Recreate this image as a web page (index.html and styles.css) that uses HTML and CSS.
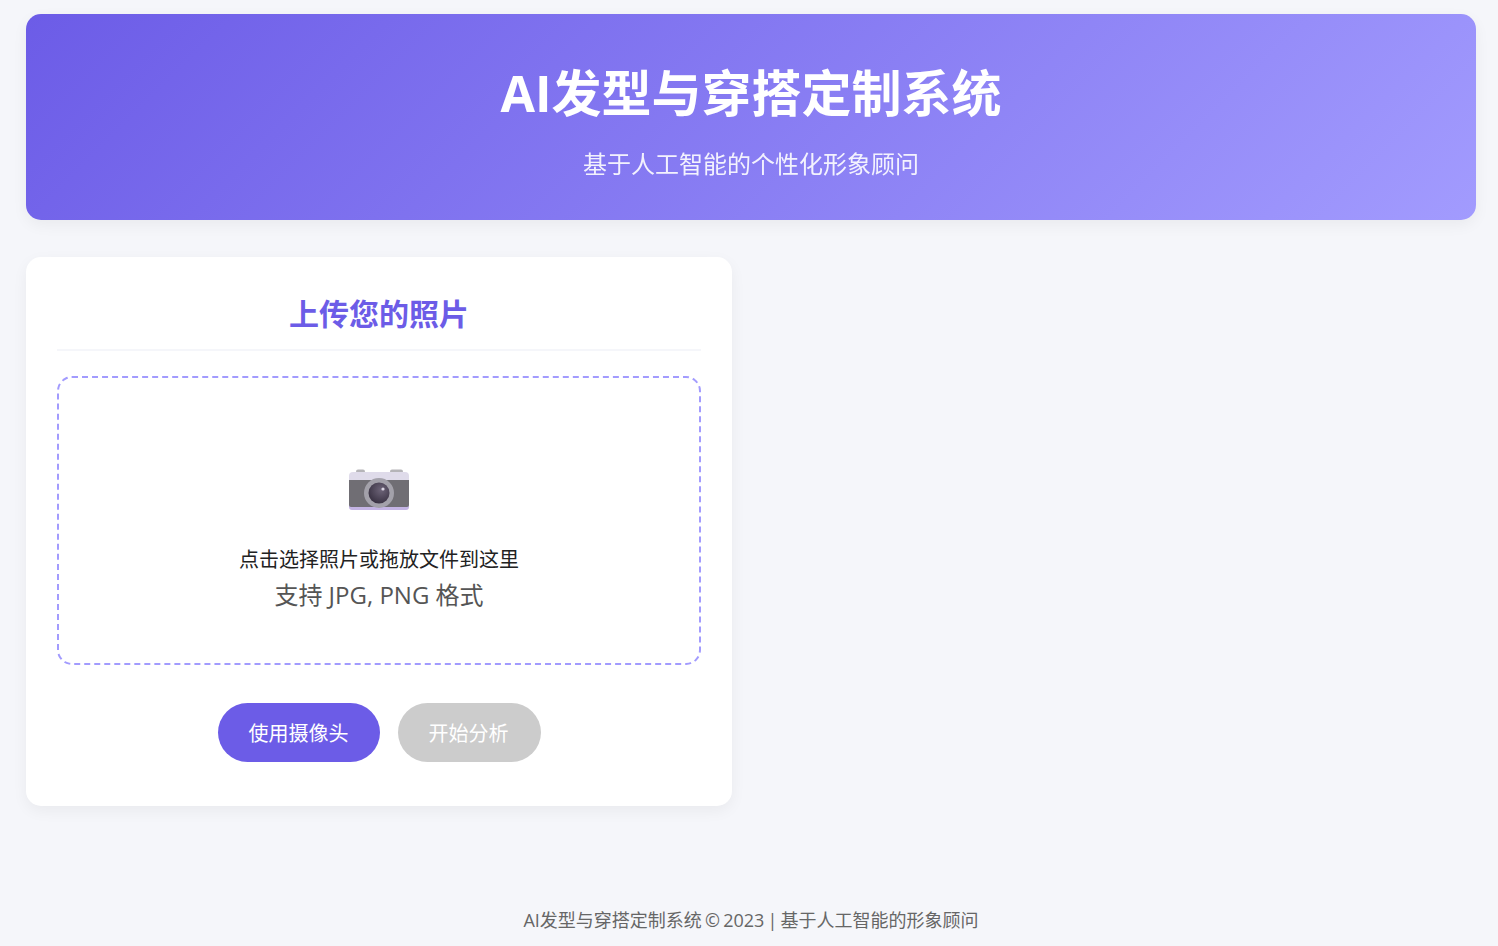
FILE: index.html
```html
<!DOCTYPE html>
<html lang="zh-CN">

<head>
    <meta charset="UTF-8">
    <meta name="viewport" content="width=device-width, initial-scale=1.0">
    <link rel="stylesheet" href="styles.css">
    <title>AI发型与穿搭定制系统</title>
</head>

<body>
    <div class="container">
        <header class="header">
            <h1>AI发型与穿搭定制系统</h1>
            <p>基于人工智能的个性化形象顾问</p>
        </header>

        <main class="main-content">
            <section class="card">
                <h2 class="card-title">上传您的照片</h2>
                <div class="upload-area">
                    <svg class="upload-icon" width="60" height="42" viewBox="0 0 60 42">
                        <defs>
                            <radialGradient id="lens" cx="0.6" cy="0.35" r="0.8">
                                <stop offset="0" stop-color="#6d6478" />
                                <stop offset="1" stop-color="#2f2838" />
                            </radialGradient>
                        </defs>
                        <rect x="7" y="0.5" width="9" height="5" rx="2" fill="#b5b4b8" />
                        <rect x="41" y="0.5" width="13" height="5" rx="2" fill="#b5b4b8" />
                        <path d="M0 35 H60 V38 Q60 41 57 41 H3 Q0 41 0 38 Z" fill="#c4b4e4" />
                        <path d="M0 11 H60 V36 Q60 38 58 38 H2 Q0 38 0 36 Z" fill="#706e74" />
                        <path d="M0 11 V7 Q0 3 4 3 H56 Q60 3 60 7 V11 Z" fill="#dfdbea" />
                        <circle cx="30" cy="24" r="15" fill="#a3a1aa" />
                        <circle cx="30" cy="24" r="10.5" fill="url(#lens)" />
                        <circle cx="34" cy="20" r="1.6" fill="#d9d4e2" />
                    </svg>
                    <p class="upload-text">点击选择照片或拖放文件到这里</p>
                    <p class="upload-hint">支持 JPG, PNG 格式</p>
                </div>
                <div class="actions">
                    <button class="btn" type="button">使用摄像头</button>
                    <button class="btn btn-disabled" type="button" disabled>开始分析</button>
                </div>
            </section>
        </main>

        <footer class="footer">AI发型与穿搭定制系统 © 2023 | 基于人工智能的形象顾问</footer>
    </div>
</body>

</html>
```

FILE: styles.css
```css
* {
    box-sizing: border-box;
    margin: 0;
    padding: 0;
}

body {
    background: #f5f6fa;
    color: #333333;
    font-family: "Open Sans", "Noto Sans CJK SC", sans-serif;
}

.container {
    width: 1450px;
    margin-left: 26px;
    padding-top: 14px;
}

.header {
    height: 206px;
    padding-top: 45px;
    text-align: center;
    color: #FFFFFF;
    background: linear-gradient(135deg, #6c5ce7, #a29bfe);
    border-radius: 15px;
    box-shadow: 0 5px 15px rgba(0, 0, 0, 0.05);
}

.header h1 {
    font-size: 50px;
    line-height: 68px;
    font-weight: 700;
}

.header p {
    margin-top: 20px;
    font-size: 24px;
    line-height: 34px;
    opacity: 0.9;
}

.main-content {
    display: grid;
    grid-template-columns: 706px 706px;
    gap: 38px;
    margin-top: 37px;
}

.card {
    height: 549px;
    padding: 31px;
    background: #FFFFFF;
    border-radius: 15px;
    box-shadow: 0 5px 15px rgba(0, 0, 0, 0.05);
}

.card-title {
    height: 63px;
    font-size: 30px;
    line-height: 52px;
    font-weight: 700;
    text-align: center;
    color: #6c5ce7;
    border-bottom: 2px solid #f5f6fa;
}

.upload-area {
    height: 289px;
    margin-top: 25px;
    padding-top: 91px;
    text-align: center;
    border: 2px dashed #a29bfe;
    border-radius: 15px;
}

.upload-icon {
    display: block;
    margin: 0 auto;
    filter: blur(0.5px);
}

.upload-text {
    margin-top: 33px;
    font-size: 20px;
    line-height: 32px;
    color: #222222;
}

.upload-hint {
    margin-top: 1px;
    font-size: 24px;
    line-height: 36px;
    color: #555555;
}

.actions {
    display: flex;
    justify-content: center;
    gap: 18px;
    margin-top: 38px;
}

.btn {
    height: 59px;
    padding: 0 31px;
    border: 0;
    border-radius: 30px;
    font-family: inherit;
    font-size: 20px;
    color: #FFFFFF;
    background: #6c5ce7;
    cursor: pointer;
}

.btn-disabled {
    padding-right: 32px;
    background: #cccccc;
    cursor: not-allowed;
}

.footer {
    margin-top: 99px;
    font-size: 18px;
    line-height: 30px;
    word-spacing: -1.5px;
    text-align: center;
    color: #666666;
}
```
